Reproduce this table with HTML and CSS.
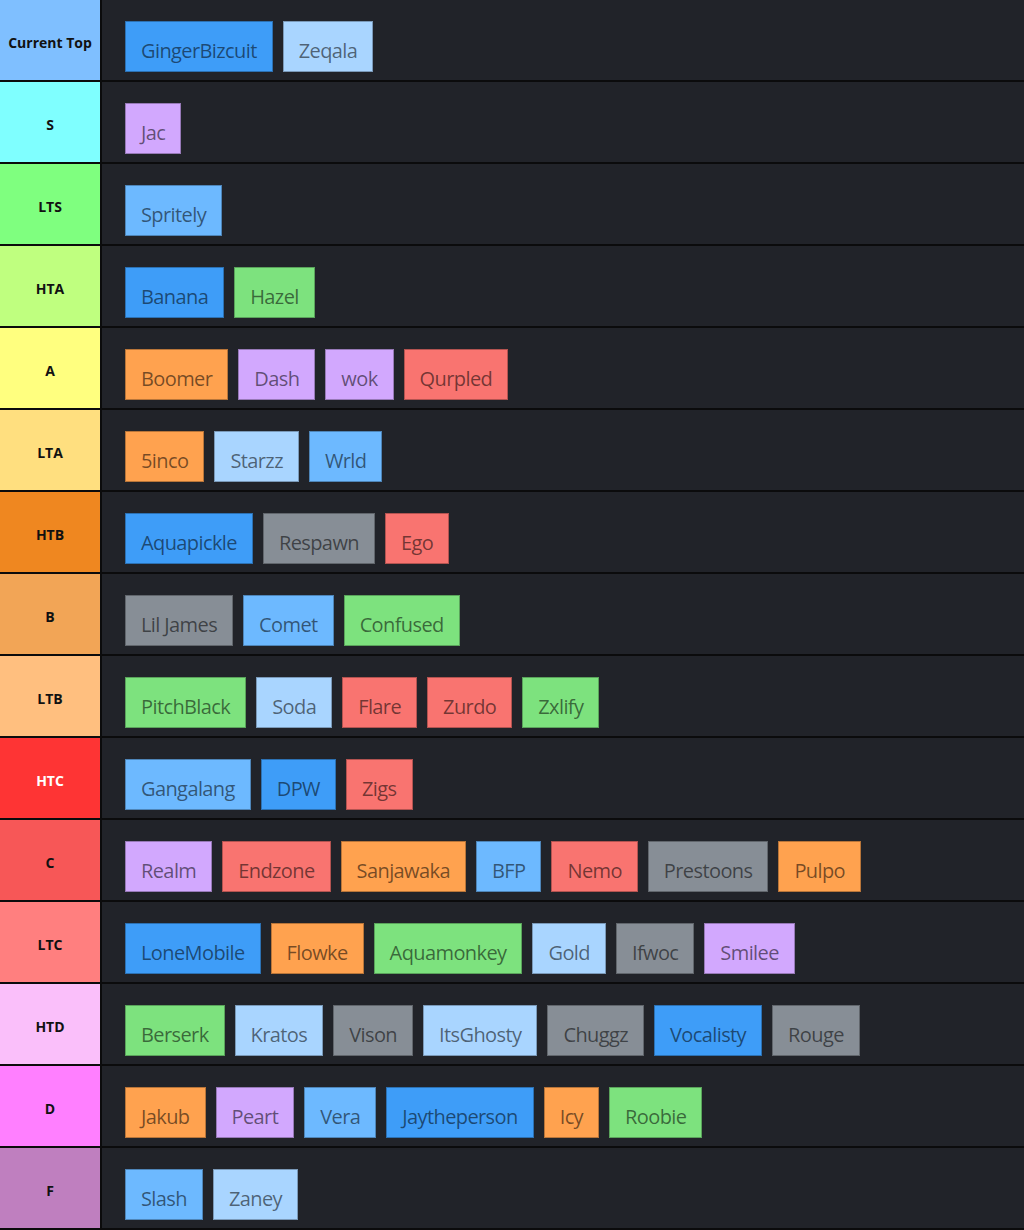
FILE: index.html
```html
<!DOCTYPE html>
<html>
<head>
<meta charset="utf-8">
<link rel="stylesheet" href="styles.css">
</head>
<body>
<div class="tierlist">
  <div class="row"><div class="label t-top">Current Top</div><div class="items"><span class="chip blue">GingerBizcuit</span><span class="chip pale">Zeqala</span></div></div>
  <div class="row"><div class="label t-s">S</div><div class="items"><span class="chip purple">Jac</span></div></div>
  <div class="row"><div class="label t-lts">LTS</div><div class="items"><span class="chip sky">Spritely</span></div></div>
  <div class="row"><div class="label t-hta">HTA</div><div class="items"><span class="chip blue">Banana</span><span class="chip green">Hazel</span></div></div>
  <div class="row"><div class="label t-a">A</div><div class="items"><span class="chip orange">Boomer</span><span class="chip purple">Dash</span><span class="chip purple">wok</span><span class="chip red">Qurpled</span></div></div>
  <div class="row"><div class="label t-lta">LTA</div><div class="items"><span class="chip orange">5inco</span><span class="chip pale">Starzz</span><span class="chip sky">Wrld</span></div></div>
  <div class="row"><div class="label t-htb">HTB</div><div class="items"><span class="chip blue">Aquapickle</span><span class="chip gray">Respawn</span><span class="chip red">Ego</span></div></div>
  <div class="row"><div class="label t-b">B</div><div class="items"><span class="chip gray">Lil James</span><span class="chip sky">Comet</span><span class="chip green">Confused</span></div></div>
  <div class="row"><div class="label t-ltb">LTB</div><div class="items"><span class="chip green">PitchBlack</span><span class="chip pale">Soda</span><span class="chip red">Flare</span><span class="chip red">Zurdo</span><span class="chip green">Zxlify</span></div></div>
  <div class="row"><div class="label t-htc">HTC</div><div class="items"><span class="chip sky">Gangalang</span><span class="chip blue">DPW</span><span class="chip red">Zigs</span></div></div>
  <div class="row"><div class="label t-c">C</div><div class="items"><span class="chip purple">Realm</span><span class="chip red">Endzone</span><span class="chip orange">Sanjawaka</span><span class="chip sky">BFP</span><span class="chip red">Nemo</span><span class="chip gray">Prestoons</span><span class="chip orange">Pulpo</span></div></div>
  <div class="row"><div class="label t-ltc">LTC</div><div class="items"><span class="chip blue">LoneMobile</span><span class="chip orange">Flowke</span><span class="chip green">Aquamonkey</span><span class="chip pale">Gold</span><span class="chip gray">Ifwoc</span><span class="chip purple">Smilee</span></div></div>
  <div class="row"><div class="label t-htd">HTD</div><div class="items"><span class="chip green">Berserk</span><span class="chip pale">Kratos</span><span class="chip gray">Vison</span><span class="chip pale">ItsGhosty</span><span class="chip gray">Chuggz</span><span class="chip blue">Vocalisty</span><span class="chip gray">Rouge</span></div></div>
  <div class="row"><div class="label t-d">D</div><div class="items"><span class="chip orange">Jakub</span><span class="chip purple">Peart</span><span class="chip sky">Vera</span><span class="chip blue">Jaytheperson</span><span class="chip orange">Icy</span><span class="chip green">Roobie</span></div></div>
  <div class="row"><div class="label t-f">F</div><div class="items"><span class="chip sky">Slash</span><span class="chip pale">Zaney</span></div></div>
</div>
</body>
</html>
```

FILE: styles.css
```css
html, body {
  margin: 0;
  padding: 0;
  background: #212329;
}

.tierlist {
  width: 1024px;
  display: flex;
  flex-direction: column;
}

.row {
  display: flex;
  height: 82px;
  box-sizing: border-box;
  border-bottom: 2px solid #0b0b0c;
}

.label {
  width: 102px;
  flex: 0 0 102px;
  border-right: 2px solid #0b0b0c;
  display: flex;
  align-items: center;
  justify-content: center;
  padding-top: 5px;
  box-sizing: border-box;
  font-family: "Open Sans", "Noto Sans", sans-serif;
  font-weight: 700;
  font-size: 14px;
  letter-spacing: 0;
  color: #111;
}

.items {
  flex: 1;
  background: #212329;
  display: flex;
  flex-wrap: wrap;
  align-items: flex-start;
  gap: 10px;
  padding: 21px 23px 8px;
}

.chip {
  height: 51px;
  box-sizing: border-box;
  display: flex;
  align-items: center;
  padding: 7px 15px 0;
  border: 1px solid rgba(0, 0, 0, 0.28);
  font-family: "Open Sans", "Noto Sans", sans-serif;
  font-size: 20px;
  letter-spacing: -0.6px;
  color: rgba(0, 0, 0, 0.55);
}

.blue { background: #3e9df8; }
.sky { background: #6db9ff; }
.pale { background: #a9d5ff; }
.purple { background: #d2a8fe; }
.green { background: #7de27e; }
.orange { background: #ffa24f; }
.red { background: #f97470; }
.gray { background: #878e96; }

.t-top { background: #7fbfff; }
.t-s { background: #7fffff; }
.t-lts { background: #7fff7f; }
.t-hta { background: #bfff7f; }
.t-a { background: #ffff7f; }
.t-lta { background: #ffdf7f; }
.t-htb { background: #ef8720; }
.t-b { background: #f2a556; }
.t-ltb { background: #ffbf7f; }
.t-htc { background: #fe3434; color: #fff; }
.t-c { background: #f75757; }
.t-ltc { background: #ff7f7f; }
.t-htd { background: #fabffa; }
.t-d { background: #ff7fff; }
.t-f { background: #bf7fbf; }
```
